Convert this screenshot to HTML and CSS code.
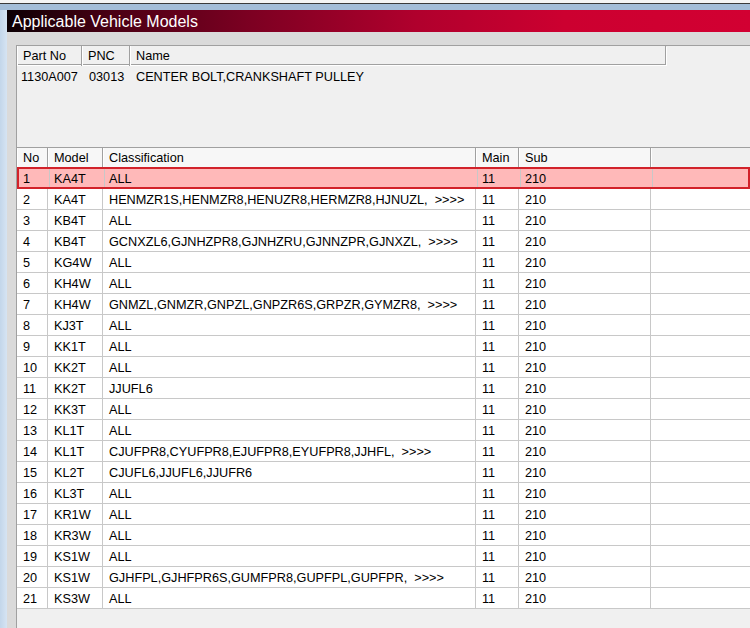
FILE: index.html
```html
<!DOCTYPE html>
<html>
<head>
<meta charset="utf-8">
<link rel="stylesheet" href="styles.css">
</head>
<body>
<div class="topline"></div>
<div class="topblue"></div>
<div class="shell">
  <div class="frame-left"></div>
  <div class="win">
    <div class="title">Applicable Vehicle Models</div>
    <div class="body">
      <div class="panel">
        <div class="parts">
          <div class="prow phead">
            <div class="c">Part No</div><div class="c">PNC</div><div class="c">Name</div>
          </div>
          <div class="prow pdata">
            <div class="c">1130A007</div><div class="c">03013</div><div class="c">CENTER BOLT,CRANKSHAFT PULLEY</div>
          </div>
        </div>
        <div class="grid">
          <div class="row head"><div class="c">No</div><div class="c">Model</div><div class="c">Classification</div><div class="c">Main</div><div class="c">Sub</div><div class="c e"></div></div>
          <div class="row sel"><div class="c">1</div><div class="c">KA4T</div><div class="c">ALL</div><div class="c">11</div><div class="c">210</div><div class="c e"></div></div>
          <div class="row"><div class="c">2</div><div class="c">KA4T</div><div class="c">HENMZR1S,HENMZR8,HENUZR8,HERMZR8,HJNUZL,  &gt;&gt;&gt;&gt;</div><div class="c">11</div><div class="c">210</div><div class="c e"></div></div>
          <div class="row"><div class="c">3</div><div class="c">KB4T</div><div class="c">ALL</div><div class="c">11</div><div class="c">210</div><div class="c e"></div></div>
          <div class="row"><div class="c">4</div><div class="c">KB4T</div><div class="c">GCNXZL6,GJNHZPR8,GJNHZRU,GJNNZPR,GJNXZL,  &gt;&gt;&gt;&gt;</div><div class="c">11</div><div class="c">210</div><div class="c e"></div></div>
          <div class="row"><div class="c">5</div><div class="c">KG4W</div><div class="c">ALL</div><div class="c">11</div><div class="c">210</div><div class="c e"></div></div>
          <div class="row"><div class="c">6</div><div class="c">KH4W</div><div class="c">ALL</div><div class="c">11</div><div class="c">210</div><div class="c e"></div></div>
          <div class="row"><div class="c">7</div><div class="c">KH4W</div><div class="c">GNMZL,GNMZR,GNPZL,GNPZR6S,GRPZR,GYMZR8,  &gt;&gt;&gt;&gt;</div><div class="c">11</div><div class="c">210</div><div class="c e"></div></div>
          <div class="row"><div class="c">8</div><div class="c">KJ3T</div><div class="c">ALL</div><div class="c">11</div><div class="c">210</div><div class="c e"></div></div>
          <div class="row"><div class="c">9</div><div class="c">KK1T</div><div class="c">ALL</div><div class="c">11</div><div class="c">210</div><div class="c e"></div></div>
          <div class="row"><div class="c">10</div><div class="c">KK2T</div><div class="c">ALL</div><div class="c">11</div><div class="c">210</div><div class="c e"></div></div>
          <div class="row"><div class="c">11</div><div class="c">KK2T</div><div class="c">JJUFL6</div><div class="c">11</div><div class="c">210</div><div class="c e"></div></div>
          <div class="row"><div class="c">12</div><div class="c">KK3T</div><div class="c">ALL</div><div class="c">11</div><div class="c">210</div><div class="c e"></div></div>
          <div class="row"><div class="c">13</div><div class="c">KL1T</div><div class="c">ALL</div><div class="c">11</div><div class="c">210</div><div class="c e"></div></div>
          <div class="row"><div class="c">14</div><div class="c">KL1T</div><div class="c">CJUFPR8,CYUFPR8,EJUFPR8,EYUFPR8,JJHFL,  &gt;&gt;&gt;&gt;</div><div class="c">11</div><div class="c">210</div><div class="c e"></div></div>
          <div class="row"><div class="c">15</div><div class="c">KL2T</div><div class="c">CJUFL6,JJUFL6,JJUFR6</div><div class="c">11</div><div class="c">210</div><div class="c e"></div></div>
          <div class="row"><div class="c">16</div><div class="c">KL3T</div><div class="c">ALL</div><div class="c">11</div><div class="c">210</div><div class="c e"></div></div>
          <div class="row"><div class="c">17</div><div class="c">KR1W</div><div class="c">ALL</div><div class="c">11</div><div class="c">210</div><div class="c e"></div></div>
          <div class="row"><div class="c">18</div><div class="c">KR3W</div><div class="c">ALL</div><div class="c">11</div><div class="c">210</div><div class="c e"></div></div>
          <div class="row"><div class="c">19</div><div class="c">KS1W</div><div class="c">ALL</div><div class="c">11</div><div class="c">210</div><div class="c e"></div></div>
          <div class="row"><div class="c">20</div><div class="c">KS1W</div><div class="c">GJHFPL,GJHFPR6S,GUMFPR8,GUPFPL,GUPFPR,  &gt;&gt;&gt;&gt;</div><div class="c">11</div><div class="c">210</div><div class="c e"></div></div>
          <div class="row"><div class="c">21</div><div class="c">KS3W</div><div class="c">ALL</div><div class="c">11</div><div class="c">210</div><div class="c e"></div></div>
        </div>
      </div>
    </div>
  </div>
</div>
</body>
</html>
```

FILE: styles.css
```css
html, body {
  margin: 0;
  padding: 0;
  width: 750px;
  height: 628px;
  overflow: hidden;
  background: #f0f0f0;
  font-family: "Liberation Sans", Arial, sans-serif;
  font-size: 12.7px;
  color: #000;
}

.topline {
  height: 3px;
  background: #f4f4f4;
  border-bottom: 1px solid #3a3a3a;
}

.topblue {
  height: 6px;
  background: #a3bdd8;
}

.shell {
  display: flex;
  height: 618px;
}

.frame-left {
  width: 7px;
  background: linear-gradient(to right, #c3d6ea, #d6e4f3);
}

.win {
  flex: 1;
  display: flex;
  flex-direction: column;
  background: #dadada;
}

.title {
  height: 22px;
  line-height: 24px;
  padding-left: 5px;
  color: #fff;
  font-size: 16px;
  background: linear-gradient(to right, #0c0004 0%, #4a0014 14%, #7d0022 33%, #b0002d 55%, #cc0030 75%, #d20032 100%);
}

.body {
  flex: 1;
  padding: 13px 0 0 9px;
  display: flex;
}

.panel {
  flex: 1;
  background: #f0f0f0;
  border-top: 1px solid #a0a0a0;
  border-left: 1px solid #a0a0a0;
}

.parts {
  height: 101px;
  width: 649px;
}

.prow {
  display: grid;
  grid-template-columns: 65px 48px 1fr;
}

.phead {
  height: 18px;
  border-bottom: 1px solid #a0a0a0;
  border-right: 1px solid #a0a0a0;
  box-shadow: 1px 1px 0 #fff;
}

.phead .c {
  line-height: 20px;
  padding-left: 6px;
  border-right: 1px solid #a0a0a0;
  box-shadow: inset 1px 0 0 #fff;
}

.phead .c:last-child {
  border-right: none;
}

.pdata .c {
  line-height: 24px;
  padding-left: 4px;
}

.pdata .c:nth-child(2) {
  padding-left: 7px;
}

.pdata .c:nth-child(3) {
  padding-left: 6px;
}

.grid {
  border-top: 1px solid #a0a0a0;
}

.row {
  display: grid;
  grid-template-columns: 31px 55px 373px 43px 132px 1fr;
  height: 21px;
  background: #fff;
  border-bottom: 1px solid #c8c8c8;
  box-sizing: border-box;
}

.row .c {
  line-height: 20px;
  padding-top: 1px;
  padding-left: 6px;
  border-right: 1px solid #c8c8c8;
  white-space: pre;
  overflow: hidden;
}

.row .c.e {
  border-right: none;
}

.row.head {
  height: 20px;
  background: #f7f7f7;
  border-bottom: 1px solid #a0a0a0;
}

.row.head .c {
  line-height: 19px;
  border-right: 1px solid #a0a0a0;
  box-shadow: inset 1px 0 0 #fff;
}

.row.head .c.e {
  border-right: none;
  background: #f0f0f0;
}

.row.sel {
  background: #ffb9b9;
  border: 2px solid #d2222a;
  margin-top: -1px;
  height: 22px;
}

.row.sel .c {
  line-height: 18px;
  padding-left: 4px;
}
```
